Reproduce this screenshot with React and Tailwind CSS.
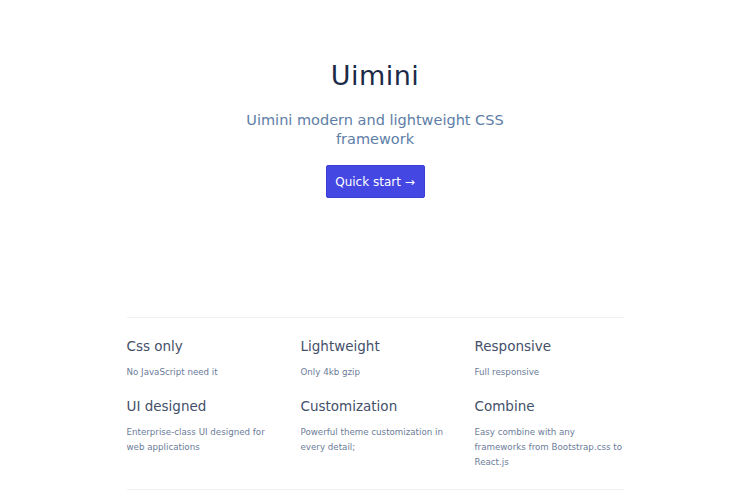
const features = [
    { title: "Css only", desc: "No JavaScript need it" },
    { title: "Lightweight", desc: "Only 4kb gzip" },
    { title: "Responsive", desc: "Full responsive" },
    { title: "UI designed", desc: "Enterprise-class UI designed for web applications" },
    { title: "Customization", desc: "Powerful theme customization in every detail;" },
    { title: "Combine", desc: "Easy combine with any frameworks from Bootstrap.css to React.js" },
];

export default function App() {
    return (
        <div
            className="w-[750px] h-[500px] overflow-hidden bg-white"
            style={{ fontFamily: '"DejaVu Sans", "Open Sans", sans-serif' }}
        >
            {/* HERO */}
            <div className="flex flex-col items-center pt-[58px] h-[317px]">
                <h1 className="text-[27px] leading-[36px] text-[#1c2a48] tracking-[0.5px]">
                    Uimini
                </h1>
                <p className="mt-[17px] w-[280px] text-center text-[14.5px] leading-[19px] text-[#5d7ea6]">
                    Uimini modern and lightweight CSS framework
                </p>
                <button className="mt-[16px] w-[99px] h-[33px] rounded-[2px] border border-[#3c3ed6] bg-[#4447e2] text-white text-[12px]">
                    Quick start →
                </button>
            </div>

            {/* FEATURES */}
            <div className="w-[497px] mx-auto border-t border-[#eef1f4]">
                <div className="grid grid-cols-3 gap-x-[25px] gap-y-[17px] pt-[19px] pb-[19px]">
                    {features.map((f) => (
                        <div key={f.title}>
                            <h3 className="text-[13.5px] leading-[18px] text-[#44506a]">
                                {f.title}
                            </h3>
                            <p className="mt-[10px] text-[8.7px] leading-[15px] text-[#6b7c99]">
                                {f.desc}
                            </p>
                        </div>
                    ))}
                </div>
                <div className="border-t border-[#eef1f4]" />
            </div>
        </div>
    );
}
